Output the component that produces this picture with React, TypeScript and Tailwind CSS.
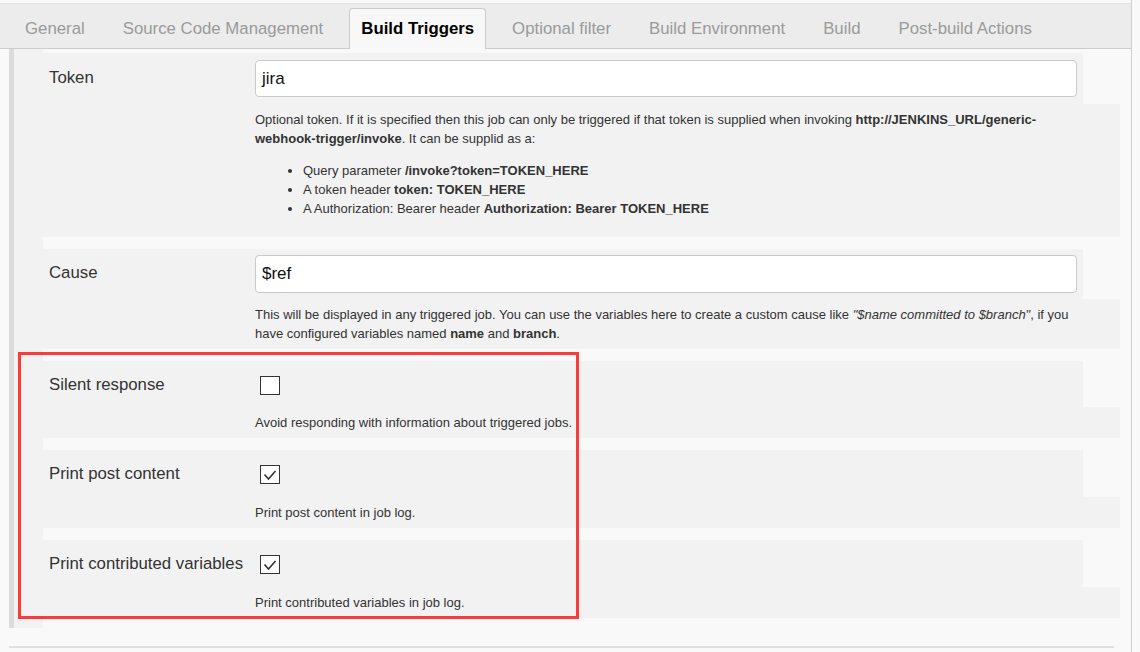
import React from 'react';

const tabs = [
  'General',
  'Source Code Management',
  'Build Triggers',
  'Optional filter',
  'Build Environment',
  'Build',
  'Post-build Actions',
];

function TextInput({ value, tall }: { value: string; tall?: boolean }) {
  return (
    <div
      className={`${tall ? 'h-[38px]' : 'h-[37px]'} flex items-center rounded-[4px] border border-[#c9c9c9] bg-white px-[6px] text-[17px] text-[#111]`}
    >
      {value}
    </div>
  );
}

function CheckBox({ checked }: { checked?: boolean }) {
  return (
    <div className="ml-[5px] h-[19px] w-[20px] border border-[#333] bg-white">
      {checked && (
        <svg width="18" height="17" viewBox="0 0 18 17">
          <polyline points="3.5,8.5 7.5,13 14.5,5" fill="none" stroke="#333" strokeWidth="1.6" />
        </svg>
      )}
    </div>
  );
}

function Row({
  label,
  control,
  help,
  padTop,
  padBottom,
  labelTop = 'pt-[14px]',
}: {
  label: string;
  control: React.ReactNode;
  help: React.ReactNode;
  padTop: string;
  padBottom: string;
  labelTop?: string;
}) {
  return (
    <div>
      <div className="flex w-[1040px] bg-[#f2f2f2]">
        <div className={`w-[212px] shrink-0 pl-[6px] ${labelTop} text-[16.8px] leading-[19px] text-[#333]`}>
          {label}
        </div>
        <div className={`flex-1 pr-[6px] ${padTop} ${padBottom}`}>{control}</div>
      </div>
      <div className="bg-[#f2f2f2] py-[6px] pl-[212px] pr-[30px] text-[13px] leading-[19px] text-[#333]">
        {help}
      </div>
    </div>
  );
}

export default function App() {
  return (
    <div className="relative h-[652px] w-[1140px] overflow-hidden bg-[#f9f9f9] font-['Liberation_Sans',Arial,sans-serif]">
      <div className="h-full w-[1132px] border-r border-[#cfcfcf] pt-[3px]">
        {/* Tab bar */}
        <div className="flex h-[46px] items-end border-y border-t-[#e3e3e3] border-b-[#cccccc] bg-[#ececec] pl-[6px]">
          {tabs.map((t) =>
            t === 'Build Triggers' ? (
              <div
                key={t}
                className="relative -mb-px mx-[7px] flex h-[41px] items-start rounded-t-[4px] border border-b-0 border-[#cccccc] bg-[#f8f8f8] px-[11px] pt-[10px] text-[16.8px] font-bold leading-[19px] text-black"
              >
                {t}
              </div>
            ) : (
              <div
                key={t}
                className="mx-[7px] flex h-[41px] items-start px-[12px] pt-[12px] text-[16.8px] leading-[19px] text-[#9a9a9a]"
              >
                {t}
              </div>
            )
          )}
        </div>

        {/* Form body */}
        <div className="flex pl-[9px]">
          <div className="w-[5px] shrink-0 bg-[#dcdcdc]" />
          <div className="w-[29px] shrink-0 bg-[#f2f2f2]" />
          <div className="flex w-[1077px] flex-col gap-[12px] pb-[10px] pt-[4px]">
            <Row
              label="Token"
              labelTop="pt-[15px]"
              padTop="pt-[7px]"
              padBottom="pb-[7px]"
              control={<TextInput value="jira" />}
              help={
                <>
                  <div>
                    Optional token. If it is specified then this job can only be triggered if that token is supplied when
                    invoking <b>http://JENKINS_URL/generic-</b>
                    <br />
                    <b>webhook-trigger/invoke</b>. It can be supplid as a:
                  </div>
                  <ul className="my-[13px] list-disc pl-[48px]">
                    <li>
                      Query parameter <b>/invoke?token=TOKEN_HERE</b>
                    </li>
                    <li>
                      A token header <b>token: TOKEN_HERE</b>
                    </li>
                    <li>
                      A Authorization: Bearer header <b>Authorization: Bearer TOKEN_HERE</b>
                    </li>
                  </ul>
                </>
              }
            />
            <Row
              label="Cause"
              padTop="pt-[6px]"
              padBottom="pb-[6px]"
              control={<TextInput value="$ref" tall />}
              help={
                <div>
                  This will be displayed in any triggered job. You can use the variables here to create a custom cause
                  like <i>"$name committed to $branch"</i>, if you
                  <br />
                  have configured variables named <b>name</b> and <b>branch</b>.
                </div>
              }
            />
            <Row
              label="Silent response"
              padTop="pt-[15px]"
              padBottom="pb-[12px]"
              control={<CheckBox />}
              help={<div>Avoid responding with information about triggered jobs.</div>}
            />
            <Row
              label="Print post content"
              padTop="pt-[15px]"
              padBottom="pb-[13px]"
              control={<CheckBox checked />}
              help={<div>Print post content in job log.</div>}
            />
            <Row
              label="Print contributed variables"
              padTop="pt-[15px]"
              padBottom="pb-[13px]"
              control={<CheckBox checked />}
              help={<div>Print contributed variables in job log.</div>}
            />
          </div>
        </div>
        <div className="ml-[9px] mt-[18px] h-[2px] w-[1105px] bg-[#e0e0e0]" />
      </div>

      {/* Red annotation frame */}
      <div className="absolute left-[18px] top-[352px] h-[267px] w-[561px] border-[3px] border-[#fb3a3a]" />
    </div>
  );
}
